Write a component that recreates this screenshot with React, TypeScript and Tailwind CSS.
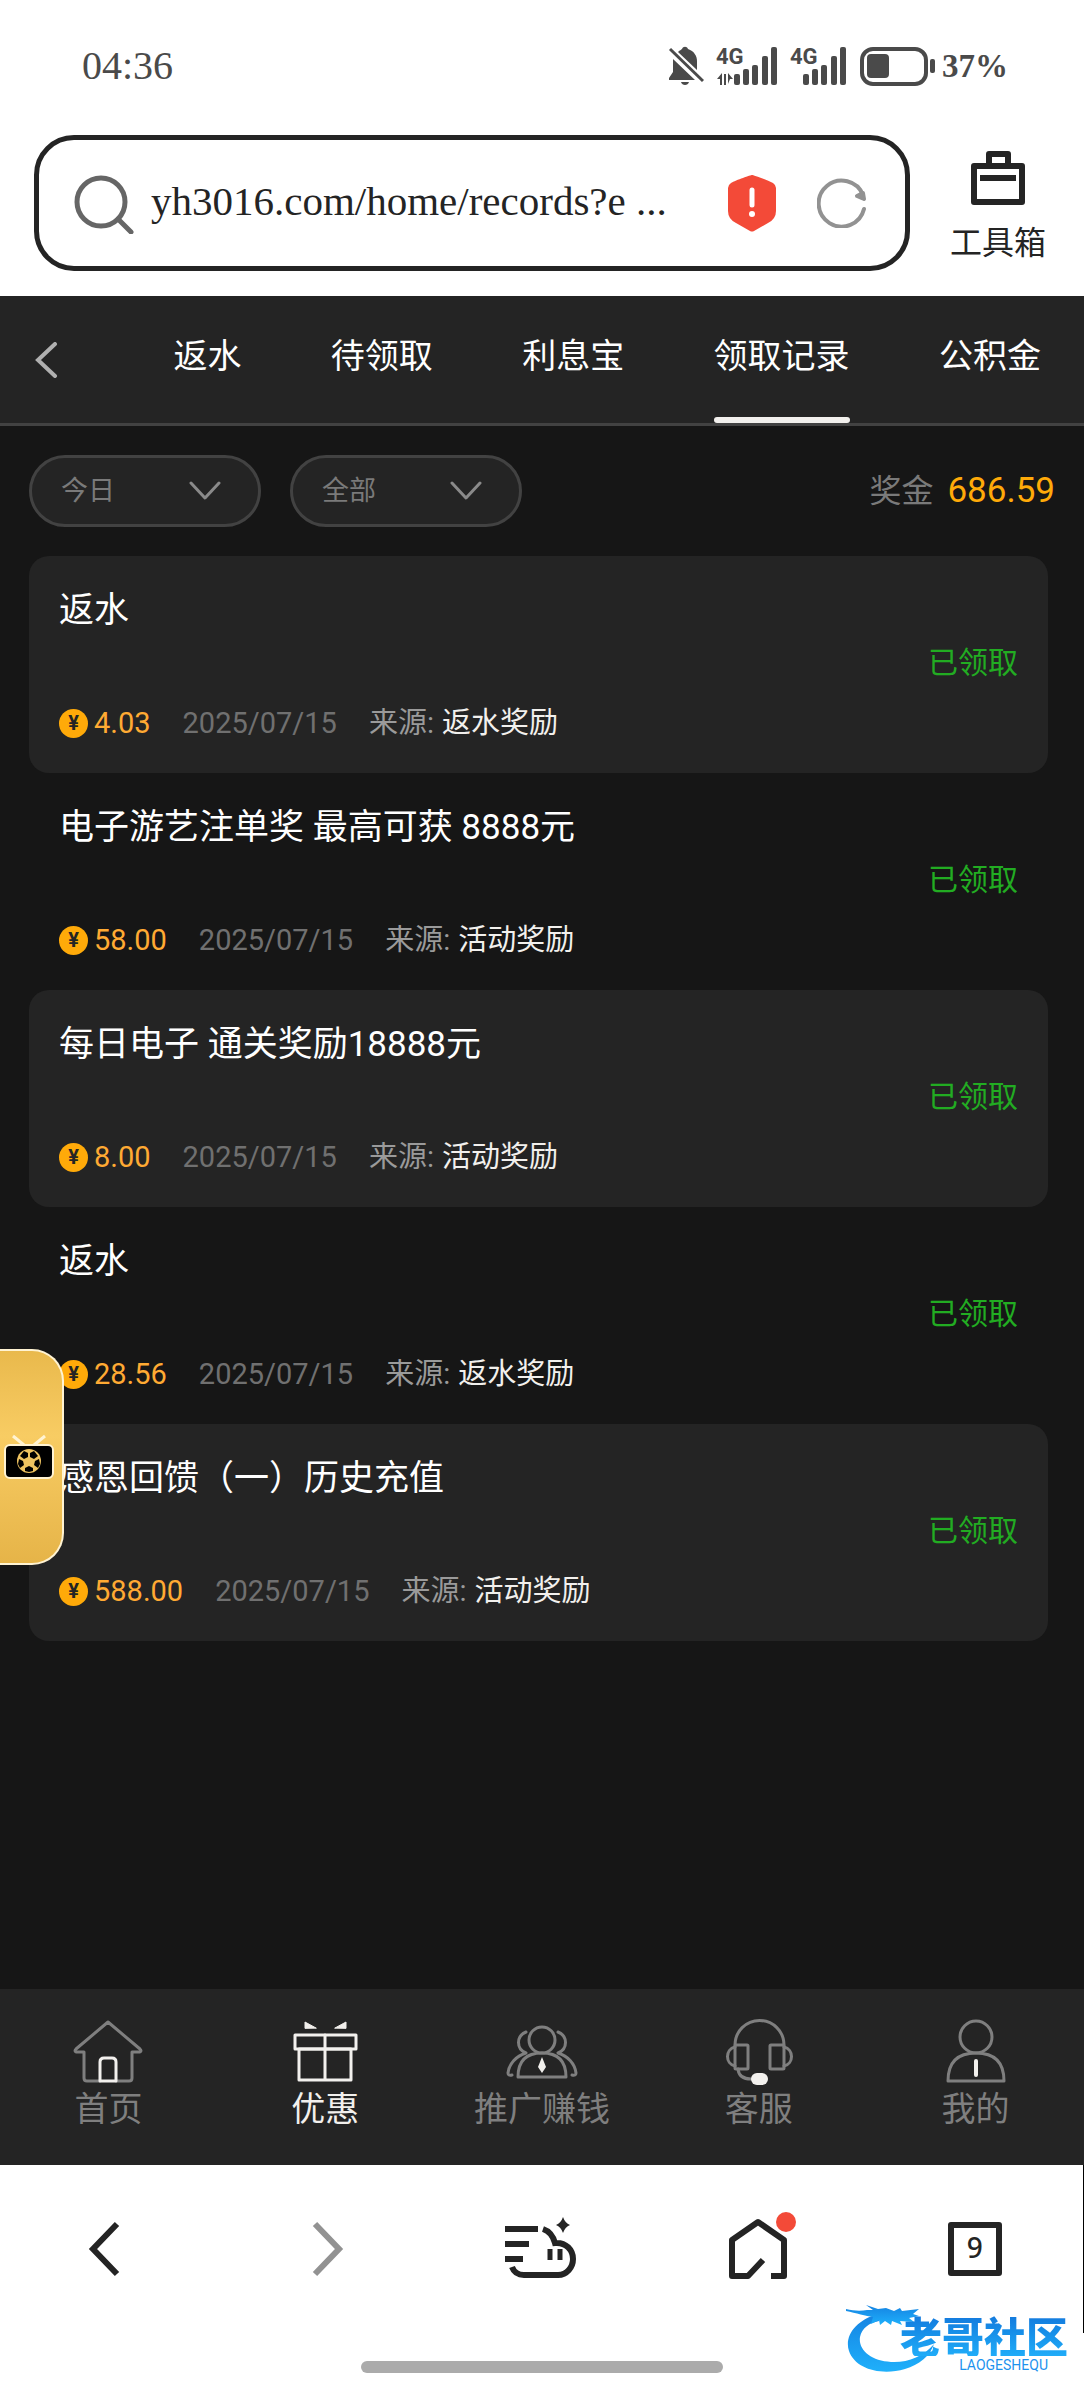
import { useState } from 'react';
import type { ReactNode } from 'react';
import clsx from 'clsx';

const sans = "font-['Roboto','Noto_Sans_CJK_SC',sans-serif]";
const serif = "font-['Liberation_Serif','Noto_Sans_CJK_SC',serif]";

const tabs = ['返水', '待领取', '利息宝', '领取记录', '公积金'];

const records = [
  { id: 1, title: '返水', amount: '4.03', date: '2025/07/15', source: '返水奖励' },
  { id: 2, title: '电子游艺注单奖 最高可获 8888元', amount: '58.00', date: '2025/07/15', source: '活动奖励' },
  { id: 3, title: '每日电子 通关奖励18888元', amount: '8.00', date: '2025/07/15', source: '活动奖励' },
  { id: 4, title: '返水', amount: '28.56', date: '2025/07/15', source: '返水奖励' },
  { id: 5, title: '感恩回馈（一）历史充值', amount: '588.00', date: '2025/07/15', source: '活动奖励' },
];

function SignalBars() {
  return (
    <>
      <rect x="0" y="28" width="6" height="11" rx="2" />
      <rect x="9" y="23" width="6" height="16" rx="2" />
      <rect x="18" y="19" width="6" height="20" rx="2" />
      <rect x="28" y="10" width="6" height="29" rx="2" />
      <rect x="37" y="1" width="6" height="38" rx="2" />
    </>
  );
}

function StatusBar() {
  return (
    <div className={clsx('flex h-[132px] items-center justify-between pl-[82px] pr-[76px] text-[#4a4a4a]', serif)}>
      <span className="text-[40px] leading-10">04:36</span>
      <div className="flex items-center gap-3">
        <svg className="w-9 h-10" viewBox="0 0 36 40" fill="#4a4a4a">
          <path d="M5 13L27 34H1v-2l4-6z" />
          <path d="M10 6c2-2 3-2 4-3 1-3 5-3 6 0 6 2 9 7 9 12v9z" />
          <path d="M13 36h8c-1 4-7 4-8 0z" />
          <path d="M2 3l33 32" stroke="#4a4a4a" strokeWidth="3" />
        </svg>
        <svg className="w-[62px] h-12" viewBox="0 -4 62 48" fill="#4a4a4a">
          <text x="0" y="18" fontSize="22" fontWeight="700" fontFamily="Roboto, sans-serif">4G</text>
          <path d="M1 33l5-6v12H4v-6z" />
          <path d="M8 28h2v11H8zM12 27l5 6h-3l-2 5z" />
          <g transform="translate(18 0)"><SignalBars /></g>
        </svg>
        <svg className="w-[58px] h-12" viewBox="0 -4 58 48" fill="#4a4a4a">
          <text x="0" y="18" fontSize="22" fontWeight="700" fontFamily="Roboto, sans-serif">4G</text>
          <g transform="translate(13 0)"><SignalBars /></g>
        </svg>
        <div className="flex items-center gap-1.5">
          <svg className="w-[76px] h-10" viewBox="0 0 76 40">
            <rect x="2" y="3" width="64" height="35" rx="11" fill="none" stroke="#4a4a4a" strokeWidth="4" />
            <rect x="7" y="8" width="22" height="24" rx="4" fill="#4a4a4a" />
            <rect x="70" y="13" width="5" height="14" rx="2" fill="#4a4a4a" />
          </svg>
          <span className="text-[33px] leading-10 font-bold">37%</span>
        </div>
      </div>
    </div>
  );
}

function AddressBar() {
  const [url, setUrl] = useState('yh3016.com/home/records?e ...');

  return (
    <div className="flex items-center gap-10 pl-[34px] pr-[38px] pt-[3px] pb-[25px]">
      <div className="flex h-[136px] flex-1 items-center rounded-[40px] border-[5px] border-[#242424] pl-[34px] pr-[38px]">
        <svg className="w-[62px] h-[62px] shrink-0" viewBox="0 0 62 62" fill="none" stroke="#666" strokeWidth="5" strokeLinecap="round">
          <circle cx="28" cy="30" r="24" />
          <path d="M45 47l13 13" />
        </svg>
        <input
          aria-label="网址"
          value={url}
          onChange={e => setUrl(e.target.value)}
          className={clsx('ml-4 min-w-0 flex-1 bg-transparent pb-1 text-[41px] leading-[52px] text-[#242424] outline-none', serif)}
        />
        <button type="button" aria-label="安全警告" className="ml-6">
          <svg className="w-[50px] h-[58px]" viewBox="0 0 50 58">
            <path d="M25 1c1 0 16 5 21 8q3 2 3 5v23q0 8-8 12L27 57q-2 1-4 0L9 49q-8-4-8-12V14q0-3 3-5C9 6 24 1 25 1z" fill="#f34a38" />
            <path d="M25 16v15" stroke="#fff" strokeWidth="5" strokeLinecap="round" />
            <circle cx="25" cy="40" r="3" fill="#fff" />
          </svg>
        </button>
        <button type="button" aria-label="刷新" className="ml-10">
          <svg className="w-[50px] h-[50px]" viewBox="0 0 50 50" fill="none" stroke="#929292" strokeWidth="4" strokeLinecap="round" strokeLinejoin="round">
            <path d="M47 31A23 23 0 1 1 46 17" />
            <path d="M40 18l7 3-1-6z" />
          </svg>
        </button>
      </div>
      <button type="button" className={clsx('flex flex-col items-center gap-[18px] pt-2 text-[#242424]', sans)}>
        <svg className="w-[54px] h-[54px]" viewBox="0 0 54 54" fill="none" stroke="#242424" strokeWidth="6" strokeLinejoin="round">
          <rect x="3" y="15" width="48" height="36" />
          <path d="M18 14V3h19v11" />
          <path d="M9 27h36" />
        </svg>
        <span className="text-[32px] leading-10">工具箱</span>
      </button>
    </div>
  );
}

function Filter({ label, options }: { label: string; options: string[] }) {
  return (
    <label className="relative block w-[232px]">
      <select
        aria-label={label}
        className="h-[72px] w-full appearance-none rounded-full border-[3px] border-[#424242] bg-[#242424] pl-[29px] text-[27px] text-[#7a7a7a] outline-none"
      >
        {options.map(o => <option key={o}>{o}</option>)}
      </select>
      <svg className="pointer-events-none absolute right-10 top-6 w-8 h-6" viewBox="0 0 32 24" fill="none" stroke="#8a8a8a" strokeWidth="3" strokeLinecap="round" strokeLinejoin="round">
        <path d="M2 4l14 15L30 4" />
      </svg>
    </label>
  );
}

// Football TV shortcut pinned to the left edge
function LiveShortcut() {
  return (
    <button
      type="button"
      aria-label="足球直播"
      className="absolute left-0 top-[1053px] flex h-[216px] w-16 items-center rounded-r-[32px] border-y-2 border-r-2 border-[#fff3d2] bg-linear-to-b from-[#e9b94c] via-[#f8cc63] via-40% to-[#e6b448] pl-1"
    >
      <svg className="w-[50px] h-[46px]" viewBox="0 0 50 46">
        <path d="M9 2l11 9M41 2L30 11" stroke="#fff3d2" strokeWidth="3" />
        <rect x="1" y="11" width="48" height="33" rx="5" fill="#000" stroke="#fff3d2" strokeWidth="2" />
        <circle cx="25" cy="27" r="12" fill="#eec360" />
        <g fill="#000">
          <path d="M20 17l4 2v4l-4 2-4-3z" />
          <path d="M30 17l-4 2v4l4 2 4-3z" />
          <path d="M15 25l4 2 1 4-4 3-2-4z" />
          <path d="M35 25l-4 2-1 4 4 3 2-4z" />
          <path d="M21 34l4-2 4 2v3l-4 1-4-1z" />
        </g>
      </svg>
    </button>
  );
}

const navItems: { label: string; icon: ReactNode }[] = [
  {
    label: '首页',
    icon: (
      <>
        <path d="M26 62H13q-3 0-3-3V33H2q-2-1 0-3L34 3l32 27q2 2 0 3h-8v26q0 3-3 3H42" />
        <path d="M26 62V43q0-4 4-4h8q4 0 4 4v19z" stroke="#f2f0ed" />
      </>
    ),
  },
  {
    label: '优惠',
    icon: (
      <>
        <rect x="4" y="16" width="61" height="14" />
        <path d="M8 30h52v31H8zM34 16v45" />
        <path d="M14 9V3l11 6zM55 9V3L44 9z" fill="currentColor" strokeWidth="1" />
      </>
    ),
  },
  {
    label: '推广赚钱',
    icon: (
      <>
        <circle cx="34" cy="21" r="13" />
        <path d="M10 58q0-24 24-24t24 24z" />
        <path d="M50 13c10 4 10 17 0 21 10 3 17 11 18 20q0 3-4 2M18 13c-10 4-10 17 0 21C8 37 1 45 0 54q0 3 4 2" />
        <path d="M34 38l4 10-4 6-4-6z" fill="#f2f0ed" stroke="none" />
      </>
    ),
  },
  {
    label: '客服',
    icon: (
      <>
        <path d="M10 26a24 24 0 0 1 49 0" />
        <rect x="10" y="26" width="13" height="24" rx="1" />
        <rect x="45" y="26" width="14" height="24" rx="1" />
        <path d="M10 28c-10 2-10 17 0 19M59 28c10 2 10 17 0 19M13 50q1 10 13 10" />
        <rect x="26" y="54" width="17" height="12" rx="6" fill="#f2f0ed" stroke="none" />
      </>
    ),
  },
  {
    label: '我的',
    icon: (
      <>
        <circle cx="34" cy="18" r="16" />
        <path d="M6 62q0-28 28-28t28 28z" />
        <path d="M34 42v14" stroke="#f2f0ed" strokeWidth="4" />
      </>
    ),
  },
];

function BottomNav() {
  const [active, setActive] = useState('优惠');

  return (
    <nav className="grid grid-cols-5 bg-[#242424] pt-[30px] pb-[34px]">
      {navItems.map(item => (
        <button
          key={item.label}
          type="button"
          onClick={() => setActive(item.label)}
          className={clsx('flex flex-col items-center', active === item.label ? 'text-[#f2f0ed]' : 'text-[#7f7f7f]')}
        >
          <svg className="w-[68px] h-[68px] overflow-visible" viewBox="0 0 68 68" fill="none" stroke="currentColor" strokeWidth="3" strokeLinecap="round" strokeLinejoin="round">
            {item.icon}
          </svg>
          <span className="text-[34px] leading-[44px]">{item.label}</span>
        </button>
      ))}
    </nav>
  );
}

function BrowserToolbar() {
  return (
    <div className="grid h-[168px] grid-cols-5 place-items-center border-r border-black bg-white">
      <button type="button" aria-label="后退">
        <svg className="w-[72px] h-[72px]" viewBox="0 0 72 72" fill="none" stroke="#242424" strokeWidth="6">
          <path d="M45 11L21 36l24 25" />
        </svg>
      </button>
      <button type="button" aria-label="前进">
        <svg className="w-[72px] h-[72px]" viewBox="0 0 72 72" fill="none" stroke="#929292" strokeWidth="6">
          <path d="M26 11l24 25-24 25" />
        </svg>
      </button>
      <button type="button" aria-label="菜单">
        <svg className="w-[72px] h-[72px]" viewBox="0 0 72 72" fill="none" stroke="#242424" strokeWidth="6">
          <path d="M0 16h33M0 31h24M0 46h18" />
          <path d="M38 16q9 3 12 14c11-1 18 7 18 16 0 8-6 16-15 16H19q-9 0-12-8" />
          <path d="M45 36v11M55 36v11" strokeWidth="5" />
          <path d="M58 4q2 6 7 8-5 2-7 8-2-6-7-8 5-2 7-8z" fill="#242424" stroke="none" />
        </svg>
      </button>
      <button type="button" aria-label="主页">
        <svg className="w-[72px] h-[72px] overflow-visible" viewBox="0 0 72 72" fill="none" stroke="#242424" strokeWidth="6" strokeLinejoin="round">
          <path d="M41 47L26 63H10V27L36 9l26 18v36H49" />
          <circle cx="64" cy="9" r="12" fill="#fff" stroke="none" />
          <circle cx="64" cy="9" r="10" fill="#f34a38" stroke="none" />
        </svg>
      </button>
      <button
        type="button"
        aria-label="标签页"
        className="flex size-[54px] items-center justify-center rounded-[3px] border-[6px] border-[#242424] pb-1 font-['Noto_Sans',sans-serif] text-[28px] leading-8 font-medium text-[#242424]"
      >
        9
      </button>
    </div>
  );
}

function CommunityLogo() {
  return (
    <div className="absolute right-4 bottom-6 flex h-[72px] w-[222px] flex-col items-end pt-2.5 text-[#1d93ee]">
      <svg className="absolute left-0 top-0 w-[96px] h-[72px]" viewBox="0 0 96 72">
        <defs>
          <linearGradient id="dragon" x1="0" y1="0" x2="0" y2="1">
            <stop offset="0" stopColor="#1583e2" />
            <stop offset="1" stopColor="#1fb0fb" />
          </linearGradient>
        </defs>
        <g fill="url(#dragon)">
          <path d="M32 10C10 16-2 32 3 47c6 18 32 25 56 18 14-4 25-13 29-25-11 13-27 19-43 18C25 57 12 46 14 33 16 24 23 19 33 17z" />
          <path d="M0 5c8 2 15 2 21 1h6l-7-5 12 4 8-1 8 3 6-3 2 3 17-2-6 5 6 2-10 2 5 4-14-1 2 4-10-4-1 4-6-4-5 4-1-5-8 4 2-7C20 12 10 9 0 7z" />
        </g>
      </svg>
      <span className="relative bg-linear-to-b from-[#1478dc] to-[#20acf8] bg-clip-text font-['Noto_Sans_CJK_SC',sans-serif] text-[42px] leading-[42px] font-black text-transparent">
        老哥社区
      </span>
      <span className="relative pr-5 text-[14px] leading-[18px]">LAOGESHEQU</span>
    </div>
  );
}

export default function App() {
  const [tab, setTab] = useState('领取记录');

  return (
    <div lang="zh-CN" className={clsx('flex min-h-screen flex-col bg-white', sans)}>
      <header>
        <StatusBar />
        <AddressBar />
      </header>

      <main className="relative flex flex-1 flex-col bg-[#161616]">
        <div className="flex h-[130px] items-stretch justify-between border-b-[3px] border-[#424242] bg-[#242424] pl-[34px] pr-[43px]">
          <button type="button" aria-label="返回" className="w-[50px]">
            <svg className="w-6 h-9" viewBox="0 0 24 36" fill="none" stroke="#b0b0b0" strokeWidth="4" strokeLinecap="round">
              <path d="M21 2L4 18l17 16" />
            </svg>
          </button>
          {tabs.map(t => (
            <button key={t} type="button" onClick={() => setTab(t)} className="relative pb-2 text-[34px] leading-[44px] text-white">
              {t}
              {t === tab && <span className="absolute inset-x-0 bottom-0 h-[6px] rounded-full bg-[#f2f0ed]" />}
            </button>
          ))}
        </div>

        <div className="flex items-center gap-[29px] px-[29px] py-[29px]">
          <Filter label="日期" options={['今日', '昨日', '近七日']} />
          <Filter label="类型" options={['全部', '返水', '活动']} />
          <div className="ml-auto flex items-center gap-3.5 leading-[44px]">
            <span className="text-[32px] text-[#7a7a7a]">奖金</span>
            <span className="text-[35px] text-[#ffaa09]">686.59</span>
          </div>
        </div>

        <ul className="pl-[29px] pr-9">
          {records.map(r => (
            <li key={r.id} className="flex items-center justify-between rounded-[20px] p-[30px] odd:bg-[#242424]">
              <div className="flex flex-col gap-[67px]">
                <h3 className="text-[35px] leading-[50px] text-white">{r.title}</h3>
                <div className="flex items-center gap-8 text-[29px] leading-10">
                  <span className="flex items-center gap-1.5 text-[#ffaa33]">
                    <span className="flex size-[29px] items-center justify-center rounded-full bg-[#ffaa09] text-[20px] leading-5 font-bold text-[#242424]">¥</span>
                    {r.amount}
                  </span>
                  <span className="text-[#707070]">{r.date}</span>
                  <span className="flex gap-2 text-[#9a9a9a]">
                    来源: <span className="text-[#f2f0ed]">{r.source}</span>
                  </span>
                </div>
              </div>
              <span className="pb-1 text-[30px] leading-10 text-[#22ac22]">已领取</span>
            </li>
          ))}
        </ul>

        <LiveShortcut />
      </main>

      <BottomNav />

      <footer className="relative">
        <BrowserToolbar />
        <div className="flex h-[67px] items-center justify-center">
          <div className="h-3 w-1/3 rounded-full bg-[#ababab]" />
        </div>
        <CommunityLogo />
      </footer>
    </div>
  );
}
